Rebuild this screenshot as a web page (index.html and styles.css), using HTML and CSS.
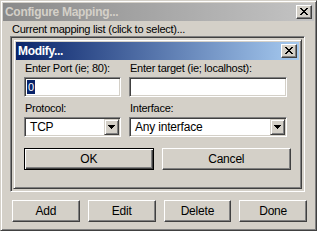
FILE: index.html
```html
<!DOCTYPE html>
<html>
<head>
<meta charset="utf-8">
<link rel="stylesheet" href="styles.css">
</head>
<body>
<div class="window">
  <div class="titlebar inactive">
    <span class="title">Configure Mapping...</span>
    <span class="close"><svg width="8" height="7" viewBox="0 0 8 7" shape-rendering="crispEdges"><path d="M0 0h2v1H0z M6 0h2v1H6z M1 1h2v1H1z M5 1h2v1H5z M2 2h4v1H2z M3 3h2v1H3z M2 4h4v1H2z M1 5h2v1H1z M5 5h2v1H5z M0 6h2v1H0z M6 6h2v1H6z" fill="#000"/></svg></span>
  </div>
  <div class="caption">Current mapping list (click to select)...</div>
  <div class="listbox">
    <div class="dialog">
      <div class="titlebar active">
        <span class="title">Modify...</span>
        <span class="close"><svg width="8" height="7" viewBox="0 0 8 7" shape-rendering="crispEdges"><path d="M0 0h2v1H0z M6 0h2v1H6z M1 1h2v1H1z M5 1h2v1H5z M2 2h4v1H2z M3 3h2v1H3z M2 4h4v1H2z M1 5h2v1H1z M5 5h2v1H5z M0 6h2v1H0z M6 6h2v1H6z" fill="#000"/></svg></span>
      </div>
      <div class="form">
        <div class="field">
          <div class="label">Enter Port (ie; 80):</div>
          <div class="input"><span class="selected">0</span></div>
        </div>
        <div class="field">
          <div class="label">Enter target (ie; localhost):</div>
          <div class="input"></div>
        </div>
        <div class="field">
          <div class="label">Protocol:</div>
          <div class="select"><span class="value">TCP</span><span class="drop"><svg width="7" height="4" viewBox="0 0 7 4" shape-rendering="crispEdges"><path d="M0 0h7v1H0z M1 1h5v1H1z M2 2h3v1H2z M3 3h1v1H3z" fill="#000"/></svg></span></div>
        </div>
        <div class="field">
          <div class="label">Interface:</div>
          <div class="select"><span class="value">Any interface</span><span class="drop"><svg width="7" height="4" viewBox="0 0 7 4" shape-rendering="crispEdges"><path d="M0 0h7v1H0z M1 1h5v1H1z M2 2h3v1H2z M3 3h1v1H3z" fill="#000"/></svg></span></div>
        </div>
      </div>
      <div class="actions">
        <div class="btn default">OK</div>
        <div class="btn">Cancel</div>
      </div>
    </div>
  </div>
  <div class="buttons">
    <div class="btn">Add</div>
    <div class="btn">Edit</div>
    <div class="btn">Delete</div>
    <div class="btn">Done</div>
  </div>
</div>
</body>
</html>
```
FILE: styles.css
```css
html, body {
  margin: 0;
  padding: 0;
  background: #d4d0c8;
}
body {
  width: 317px;
  height: 231px;
  overflow: hidden;
  font-family: "Liberation Sans", Arial, sans-serif;
  font-size: 11px;
  letter-spacing: -0.25px;
  color: #000;
}
.window {
  box-sizing: border-box;
  width: 317px;
  height: 231px;
  background: #d4d0c8;
  border: 1px solid;
  border-color: #d4d0c8 #404040 #404040 #d4d0c8;
  box-shadow: inset 1px 1px #fff, inset -1px -1px #808080;
  padding: 2px;
  display: flex;
  flex-direction: column;
}
.titlebar {
  height: 18px;
  display: flex;
  align-items: center;
  justify-content: space-between;
  padding-left: 2px;
  flex-shrink: 0;
}
.titlebar .title {
  font-weight: bold;
  font-size: 12px;
  line-height: 18px;
  letter-spacing: -0.3px;
}
.inactive {
  background: linear-gradient(to right, #8a8a8a, #c4c4c4);
  color: #d4d0c8;
}
.active {
  background: linear-gradient(to right, #0a246a, #a6caf0);
  color: #fff;
}
.close {
  box-sizing: border-box;
  width: 16px;
  height: 14px;
  margin-right: 2px;
  background: #d4d0c8;
  border: 1px solid;
  border-color: #fff #404040 #404040 #fff;
  box-shadow: inset -1px -1px #808080;
  display: flex;
  align-items: center;
  justify-content: center;
  padding: 0 1px 1px 0;
}
.close svg { display: block; }
.caption {
  margin-top: 2px;
  padding-left: 9px;
  line-height: 13px;
  height: 13px;
}
.listbox {
  box-sizing: border-box;
  margin: 0 9px 0 7px;
  height: 156px;
  border: 1px solid;
  border-color: #808080 #fff #fff #808080;
  box-shadow: inset 1px 1px #404040, inset -1px -1px #d4d0c8;
  padding: 2px;
  display: flex;
}
.dialog {
  flex: 1;
  box-sizing: border-box;
  border: 1px solid;
  border-color: #d4d0c8 #404040 #404040 #d4d0c8;
  box-shadow: inset 1px 1px #fff, inset -1px -1px #808080;
  padding: 2px;
  display: flex;
  flex-direction: column;
}
.form {
  display: grid;
  grid-template-columns: 97px 158px;
  column-gap: 8px;
  row-gap: 5px;
  padding: 2px 8px 0 8px;
}
.field {
  display: flex;
  flex-direction: column;
}
.label {
  line-height: 13px;
  height: 13px;
  margin-bottom: 2px;
  padding-left: 1px;
  white-space: nowrap;
}
.input, .select {
  box-sizing: border-box;
  height: 20px;
  background: #fff;
  border: 1px solid;
  border-color: #808080 #fff #fff #808080;
  box-shadow: inset 1px 1px #404040, inset -1px -1px #d4d0c8;
  display: flex;
  align-items: center;
  padding: 1px 2px 1px 2px;
}
.selected {
  background: #0a246a;
  color: #fff;
  line-height: 14px;
  padding: 0 1px;
  margin-left: 0;
}
.select .value {
  flex: 1;
  padding-left: 3px;
  font-size: 12px;
  letter-spacing: -0.2px;
}
.drop {
  box-sizing: border-box;
  width: 15px;
  height: 16px;
  background: #d4d0c8;
  border: 1px solid;
  border-color: #d4d0c8 #404040 #404040 #d4d0c8;
  box-shadow: inset 1px 1px #fff, inset -1px -1px #808080;
  display: flex;
  align-items: center;
  justify-content: center;
  margin-right: -1px;
}
.drop svg { display: block; }
.actions {
  display: grid;
  grid-template-columns: 1fr 1fr;
  column-gap: 8px;
  padding: 0 8px;
  margin-top: 11px;
}
.btn {
  box-sizing: border-box;
  height: 22px;
  background: #d4d0c8;
  border: 1px solid;
  border-color: #fff #404040 #404040 #fff;
  box-shadow: inset -1px -1px #808080;
  display: flex;
  align-items: center;
  justify-content: center;
  font-size: 12px;
  letter-spacing: -0.2px;
}
.btn.default {
  border-color: #000;
  box-shadow: inset 1px 1px #fff, inset -1px -1px #404040, inset -2px -2px #808080;
}
.buttons {
  display: grid;
  grid-template-columns: repeat(4, 1fr);
  column-gap: 8px;
  margin: 8px 7px 0 9px;
}
```
